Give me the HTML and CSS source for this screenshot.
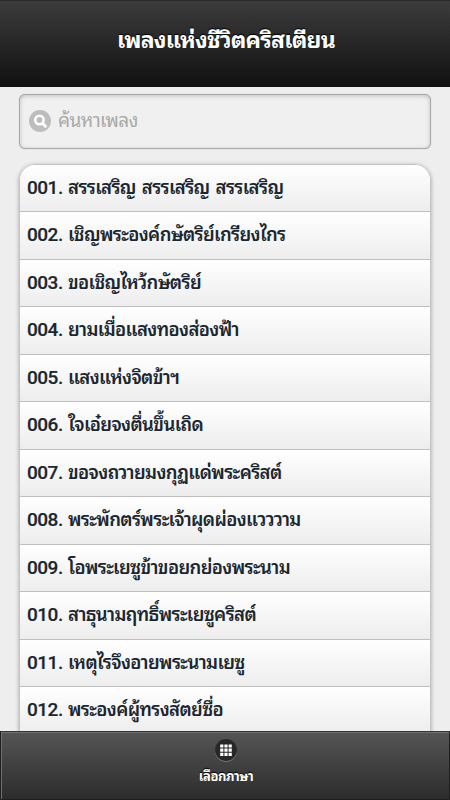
FILE: index.html
```html
<!DOCTYPE html>
<html lang="th">
<head>
    <meta charset="UTF-8">
    <meta name="viewport" content="width=device-width, initial-scale=1.0">
    <title>เพลงแห่งชีวิตคริสเตียน</title>
    <link rel="stylesheet" href="styles.css">
</head>
<body>

<header class="header">
    <h1>เพลงแห่งชีวิตคริสเตียน</h1>
</header>

<main class="content">
    <label class="search">
        <svg class="search-icon" viewBox="0 0 22 22">
            <circle cx="11" cy="11" r="11" fill="#bdbdbd"/>
            <circle cx="10.4" cy="10" r="4.2" fill="none" stroke="#fff" stroke-width="2.6"/>
            <path d="M13.3 13l4 4.2" stroke="#fff" stroke-width="3"/>
        </svg>
        <input type="text" placeholder="ค้นหาเพลง">
    </label>

    <ul class="songs">
        <li><span class="num">001.</span><span class="name">สรรเสริญ สรรเสริญ สรรเสริญ</span></li>
        <li><span class="num">002.</span><span class="name">เชิญพระองค์กษัตริย์เกรียงไกร</span></li>
        <li><span class="num">003.</span><span class="name">ขอเชิญไหว้กษัตริย์</span></li>
        <li><span class="num">004.</span><span class="name">ยามเมื่อแสงทองส่องฟ้า</span></li>
        <li><span class="num">005.</span><span class="name">แสงแห่งจิตข้าฯ</span></li>
        <li><span class="num">006.</span><span class="name">ใจเอ๋ยจงตื่นขึ้นเถิด</span></li>
        <li><span class="num">007.</span><span class="name">ขอจงถวายมงกุฏแด่พระคริสต์</span></li>
        <li><span class="num">008.</span><span class="name">พระพักตร์พระเจ้าผุดผ่องแวววาม</span></li>
        <li><span class="num">009.</span><span class="name">โอพระเยซูข้าขอยกย่องพระนาม</span></li>
        <li><span class="num">010.</span><span class="name">สาธุนามฤทธิ์พระเยซูคริสต์</span></li>
        <li><span class="num">011.</span><span class="name">เหตุไรจึงอายพระนามเยซู</span></li>
        <li><span class="num">012.</span><span class="name">พระองค์ผู้ทรงสัตย์ซื่อ</span></li>
    </ul>
</main>

<footer class="footer">
    <svg class="grid-icon" viewBox="0 0 24 24">
        <circle cx="12" cy="12.8" r="11" fill="#8a8a8a"/>
        <circle cx="12" cy="12" r="11" fill="#272727"/>
        <path d="M6.2 8h3.2M10.4 8h3.2M14.6 8h3.2M6.2 12.2h3.2M10.4 12.2h3.2M14.6 12.2h3.2M6.2 16.4h3.2M10.4 16.4h3.2M14.6 16.4h3.2" stroke="#fff" stroke-width="3.2"/>
    </svg>
    <span>เลือกภาษา</span>
</footer>

</body>
</html>
```
FILE: styles.css
```css
* {
    box-sizing: border-box;
}

body {
    font-family: Roboto, "Noto Sans Thai Looped", "Noto Looped Thai", "Droid Sans Thai", Loma, Garuda, Waree, "Noto Sans", sans-serif;
    background-color: #eee;
    margin: 0;
    height: 800px;
    display: flex;
    flex-direction: column;
    overflow: hidden;
}

.header {
    flex: none;
    height: 87px;
    display: flex;
    justify-content: center;
    background: linear-gradient(#3c3c3c, #111);
    border-top: 1px solid #2a2a2a;
    border-bottom: 1px solid #111;
    color: #fff;
}

.header h1 {
    margin: 0;
    padding: 25px 0 0 2px;
    font-size: 23px;
    line-height: 30px;
    letter-spacing: -0.75px;
    white-space: nowrap;
    text-shadow: 0 -1px 1px #000;
}

.content {
    flex: 1;
    min-height: 0;
    padding: 7px 19px 0;
    overflow: hidden;
}

.search {
    display: flex;
    align-items: center;
    height: 55px;
    padding: 0 9px 2px;
    gap: 7px;
    border: 1px solid #aaa;
    border-radius: 6px;
    background-color: #f0f0f0;
    box-shadow: inset 0 1px 4px rgba(0, 0, 0, 0.2), 0 0 1px rgba(0, 0, 0, 0.3);
}

.search-icon {
    flex: none;
    width: 22px;
    height: 22px;
}

.search input {
    flex: 1;
    min-width: 0;
    padding: 0;
    border: none;
    outline: none;
    background: none;
    font-family: inherit;
    font-size: 19px;
    line-height: 30px;
    letter-spacing: -0.6px;
}

.search input::placeholder {
    color: #a9a9a9;
}

.songs {
    list-style: none;
    margin: 15px 0 0;
    padding: 0;
    border: 1px solid #c4c4c4;
    border-radius: 16px 16px 0 0;
    box-shadow: 0 1px 4px rgba(0, 0, 0, 0.3);
    overflow: hidden;
    color: #1b2730;
    font-size: 19px;
    font-weight: 500;
}

.songs li {
    display: flex;
    height: 47.55px;
    padding: 8px 7px 0;
    line-height: 30px;
    white-space: nowrap;
    background: linear-gradient(#fff, #ededed);
    border-bottom: 1px solid #bfbfbf;
}

.songs li:first-child {
    height: 47px;
}

.num {
    flex: none;
    width: 41px;
    letter-spacing: -0.5px;
    -webkit-text-stroke: 0.2px #1b2730;
}

.name {
    font-size: 18.5px;
    font-weight: 600;
    letter-spacing: -0.64px;
    word-spacing: 2px;
}

.footer {
    flex: none;
    height: 69px;
    display: flex;
    flex-direction: column;
    align-items: center;
    padding: 6px 0 0 2px;
    background: linear-gradient(#555, #2c2c2c);
    border: 1px solid #1f1f1f;
    border-top-color: #333;
    box-shadow: inset 1px 1px 0 #707070;
    color: #fff;
    font-size: 13px;
    font-weight: bold;
    letter-spacing: -0.4px;
    text-shadow: 0 -1px 1px #000;
}

.grid-icon {
    width: 24px;
    height: 24px;
}

.footer span {
    margin-top: 5px;
    line-height: 20px;
}
```
